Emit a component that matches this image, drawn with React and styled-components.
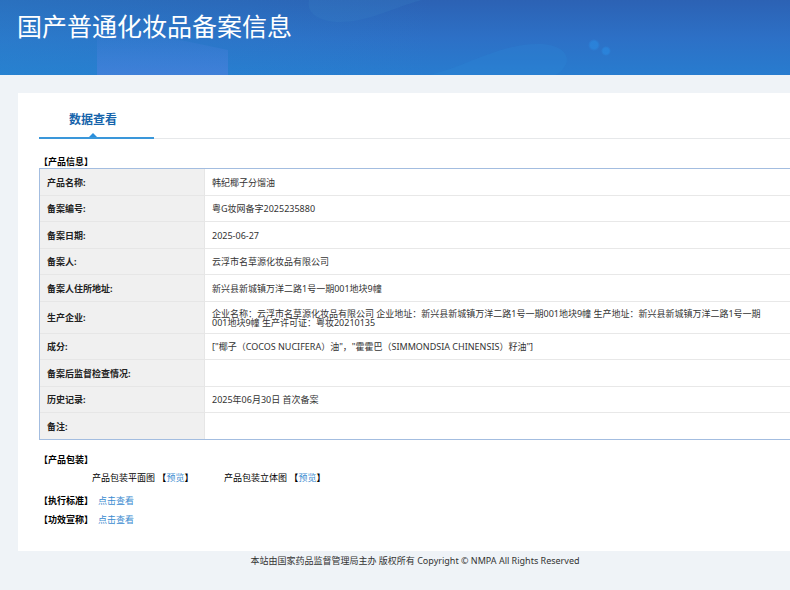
import React from 'react'
import styled, { createGlobalStyle } from 'styled-components'

const GlobalStyle = createGlobalStyle`
  * {
    box-sizing: border-box;
  }
  body {
    margin: 0;
    min-height: 100vh;
    background: #eff3f7;
    color: #000;
    font-family: "Noto Sans", "Noto Sans CJK SC", sans-serif;
    font-size: 9px;
  }
`

const Header = styled.header`
  position: relative;
  height: 75px;
  padding: 8px 17px;
  overflow: hidden;
  background:
    linear-gradient(to right, rgba(38, 140, 210, 0.35), rgba(38, 120, 210, 0) 55%),
    linear-gradient(to bottom, #2c62b4, #2d70c6 50%, #287ccf);
`

const Shapes = styled.svg`
  position: absolute;
  top: 0;
  left: 0;
`

const Title = styled.h1`
  position: relative;
  margin: 0;
  font-size: 25px;
  line-height: 36px;
  font-weight: 400;
  color: #fff;
`

const Card = styled.main`
  margin: 18px 0 0 18px;
  padding: 8px 0 22px 21px;
  background: #fff;
`

const TabBar = styled.nav`
  display: flex;
  border-bottom: 1px solid #e6e8ea;
`

const Tab = styled.a`
  position: relative;
  width: 115px;
  height: 38px;
  margin-bottom: -1px;
  padding-left: 30px;
  border-bottom: 2px solid #3a97da;
  color: #1664ab;
  font-size: 12px;
  font-weight: 700;
  line-height: 38px;
  text-decoration: none;

  &::after {
    content: '';
    position: absolute;
    left: 50px;
    bottom: 0;
    border: 4px solid transparent;
    border-top: 0;
    border-bottom-color: #2a8fdc;
  }
`

const SectionTitle = styled.h2`
  margin: ${props => props.$top}px 0 0;
  font-size: 9px;
  line-height: 13px;
  font-weight: 700;
`

const InfoTable = styled.table`
  width: 100%;
  border: 1px solid #a3bde0;
  border-right: 0;
  border-collapse: separate;
  border-spacing: 0;
  table-layout: fixed;
`

const Row = styled.tr`
  height: ${props => (props.$tall ? 32 : 27)}px;

  &:nth-child(2),
  &:nth-child(4),
  &:nth-child(7),
  &:nth-child(9),
  &:last-child {
    height: 26px;
  }
  &:last-child > * {
    border-bottom: 0;
  }
`

const Label = styled.th`
  width: 165px;
  padding: 0 7px;
  border-right: 1px solid #e6e6e6;
  border-bottom: 1px solid #e6e6e6;
  background: #f0f0f0;
  color: #222;
  font-weight: 700;
  line-height: 9px;
  text-align: left;
`

const Value = styled.td`
  padding: 0 24px 0 7px;
  border-bottom: 1px solid #e8e8e8;
  color: #333;
  line-height: 9px;
`

const Packages = styled.div`
  display: grid;
  grid-template-columns: 132px 1fr;
  margin-top: 3px;
  padding-left: 53px;
  line-height: 18px;
`

const Links = styled.div`
  margin-top: 4px;
  line-height: 19px;
`

const LinkRow = styled.div`
  display: flex;
  gap: 5px;
`

const Link = styled.a`
  color: #3a8bd0;
  text-decoration: none;
`

const Footer = styled.footer`
  padding-left: 40px;
  color: #333;
  line-height: 20px;
  text-align: center;
`

const rows = [
  ['产品名称:', '韩纪椰子分馏油'],
  ['备案编号:', '粤G妆网备字2025235880'],
  ['备案日期:', '2025-06-27'],
  ['备案人:', '云浮市名草源化妆品有限公司'],
  ['备案人住所地址:', '新兴县新城镇万洋二路1号一期001地块9幢'],
  [
    '生产企业:',
    '企业名称：云浮市名草源化妆品有限公司 企业地址：新兴县新城镇万洋二路1号一期001地块9幢 生产地址：新兴县新城镇万洋二路1号一期001地块9幢 生产许可证：粤妆20210135',
    true,
  ],
  ['成分:', '["椰子（COCOS NUCIFERA）油"，"霍霍巴（SIMMONDSIA CHINENSIS）籽油"]'],
  ['备案后监督检查情况:', ''],
  ['历史记录:', '2025年06月30日 首次备案'],
  ['备注:', ''],
]

const packages = ['产品包装平面图', '产品包装立体图']
const links = ['【执行标准】', '【功效宣称】']

const App = () => {
  return (
    <div lang="zh-CN">
      <GlobalStyle />
      <Header>
        <Shapes width="790" height="75" aria-hidden="true">
          <defs>
            <linearGradient id="block" x1="0" y1="0" x2="0" y2="1">
              <stop offset="0" stopColor="#4a80dc" stopOpacity="0" />
              <stop offset="1" stopColor="#4a80dc" stopOpacity="0.7" />
            </linearGradient>
            <radialGradient id="dot">
              <stop offset="0.6" stopColor="#2a88e0" stopOpacity="0.7" />
              <stop offset="1" stopColor="#2a88e0" stopOpacity="0" />
            </radialGradient>
          </defs>
          <path d="M97 75V26L185 41L228 50V75Z" fill="url(#block)" />
          <path d="M309 0C306 12 318 22 340 22C368 22 392 8 422 0Z" fill="#3a86c8" opacity="0.2" />
          <path d="M430 75C470 65 500 44 538 44C560 44 570 54 566 64C563 70 560 73 555 75Z" fill="#2c8fdc" opacity="0.22" />
          <circle cx="594" cy="45" r="6" fill="url(#dot)" />
          <circle cx="606" cy="51" r="5" fill="url(#dot)" />
        </Shapes>
        <Title>国产普通化妆品备案信息</Title>
      </Header>
      <Card>
        <TabBar>
          <Tab href="#info">数据查看</Tab>
        </TabBar>
        <SectionTitle id="info" $top={16}>【产品信息】</SectionTitle>
        <InfoTable>
          <tbody>
            {rows.map(([label, value, tall]) => (
              <Row key={label} $tall={tall}>
                <Label scope="row">{label}</Label>
                <Value>{value}</Value>
              </Row>
            ))}
          </tbody>
        </InfoTable>
        <SectionTitle $top={13}>【产品包装】</SectionTitle>
        <Packages>
          {packages.map(name => (
            <span key={name}>
              {name} <b>【</b><Link href="#preview">预览</Link><b>】</b>
            </span>
          ))}
        </Packages>
        <Links>
          {links.map(name => (
            <LinkRow key={name}>
              <b>{name}</b>
              <Link href="#detail">点击查看</Link>
            </LinkRow>
          ))}
        </Links>
      </Card>
      <Footer>本站由国家药品监督管理局主办 版权所有 Copyright © NMPA All Rights Reserved</Footer>
    </div>
  )
}

export default App
